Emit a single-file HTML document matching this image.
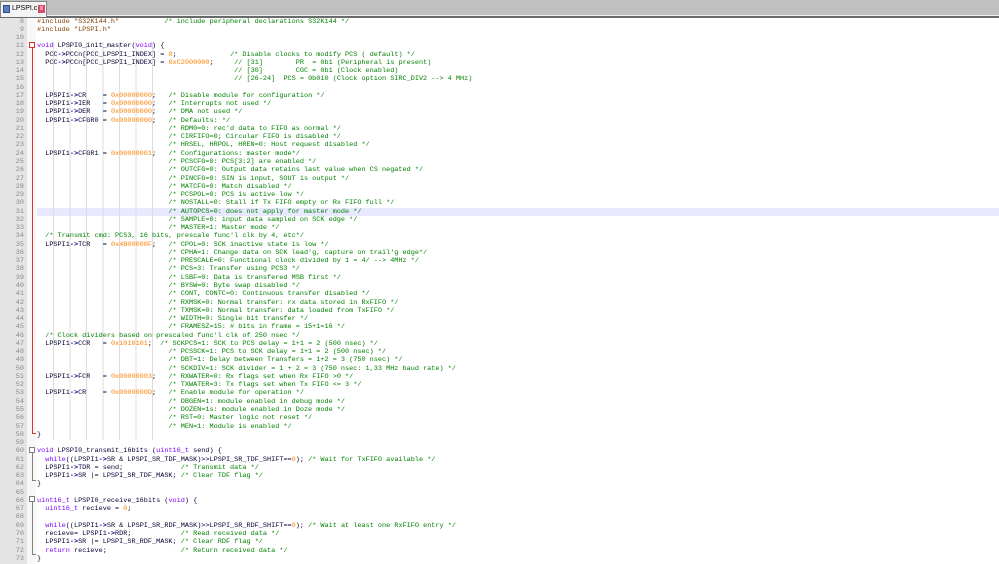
<!DOCTYPE html>
<html><head><meta charset="utf-8"><style>
html,body{margin:0;padding:0;width:999px;height:564px;overflow:hidden;background:#fff;}
#tabbar{position:absolute;left:0;top:0;width:999px;height:15px;background:#c0c0c0;border-bottom:1px solid #f0f0f0;}
#tabline{position:absolute;left:0;top:16px;width:999px;height:2px;background:#6a6a6a;}
#tab{position:absolute;left:0;top:1px;width:47px;height:16px;background:#f4f4f4;border:1px solid #888;border-bottom:none;box-sizing:border-box;font:7px "Liberation Sans",sans-serif;color:#000;}
#gut{position:absolute;left:0;top:18px;width:27px;height:546px;background:#e4e4e4;}
#fold{position:absolute;left:27px;top:18px;width:9px;height:546px;background:#f8f8f8;}
.code{position:absolute;left:0;top:17.5px;margin:0;font:6.85px/8.27px "Liberation Mono",monospace;color:#000030;white-space:pre;}
.num{position:absolute;left:0;top:17.5px;width:24px;text-align:right;font:6.85px/8.27px "Liberation Mono",monospace;color:#8a8a8a;white-space:pre;margin:0;}
.c{color:#008000}.n{color:#ff8000}.k{color:#8000ff}.p{color:#804000}.o{color:#000080;font-weight:bold}
#hl{position:absolute;left:37px;top:208.1px;width:962px;height:8.27px;background:#e8e8ff;}
#guides{position:absolute;left:53px;top:42px;width:104px;height:398px;background:repeating-linear-gradient(90deg,#dcdcdc 0 1px,transparent 1px 16.5px);}
</style></head><body>
<div id="tabbar"></div><div id="tabline"></div>
<div id="tab"><span style="position:absolute;left:2px;top:3px;width:7px;height:8px;background:#5a7fc0;border:1px solid #2b4d8c;box-sizing:border-box"></span><span style="position:absolute;left:11px;top:3px">LPSPI.c</span><span style="position:absolute;left:37px;top:3px;width:7px;height:8px;background:#d9486a;color:#fff;font-size:7px;line-height:8px;text-align:center">x</span></div>
<div id="gut"></div><div id="fold"></div>
<div id="hl"></div>
<div id="guides"></div>
<div style="position:absolute;left:29px;top:42px;width:6px;height:6px;border:1px solid #e03030;box-sizing:border-box;background:#fff"></div>
<div style="position:absolute;left:31.5px;top:48px;width:1px;height:385px;background:#e03030"></div>
<div style="position:absolute;left:31.5px;top:433px;width:4px;height:1px;background:#e03030"></div>
<div style="position:absolute;left:29px;top:447px;width:6px;height:6px;border:1px solid #808080;box-sizing:border-box;background:#fff"></div>
<div style="position:absolute;left:31.5px;top:453px;width:1px;height:27px;background:#808080"></div>
<div style="position:absolute;left:31.5px;top:480px;width:4px;height:1px;background:#808080"></div>
<div style="position:absolute;left:29px;top:496px;width:6px;height:6px;border:1px solid #808080;box-sizing:border-box;background:#fff"></div>
<div style="position:absolute;left:31.5px;top:502px;width:1px;height:52px;background:#808080"></div>
<div style="position:absolute;left:31.5px;top:554px;width:4px;height:1px;background:#808080"></div>
<pre class="num">8
9
10
11
12
13
14
15
16
17
18
19
20
21
22
23
24
25
26
27
28
29
30
31
32
33
34
35
36
37
38
39
40
41
42
43
44
45
46
47
48
49
50
51
52
53
54
55
56
57
58
59
60
61
62
63
64
65
66
67
68
69
70
71
72
73</pre>
<pre class="code" style="left:37px"><span class="p">#include "S32K144.h"</span>           <span class="c">/* include peripheral declarations S32K144 */</span>
<span class="p">#include "LPSPI.h"</span>

<span class="k">void</span> LPSPI0_init_master(<span class="k">void</span>) {
  PCC<span class="o">-&gt;</span>PCCn[PCC_LPSPI1_INDEX] = <span class="n">0</span>;             <span class="c">/* Disable clocks to modify PCS ( default) */</span>
  PCC<span class="o">-&gt;</span>PCCn[PCC_LPSPI1_INDEX] = <span class="n">0xC2000000</span>;     <span class="c">// [31]        PR  = 0b1 (Peripheral is present)</span>
                                                <span class="c">// [30]        CGC = 0b1 (Clock enabled)</span>
                                                <span class="c">// [26-24]  PCS = 0b010 (Clock option SIRC_DIV2 --&gt; 4 MHz)</span>

  LPSPI1<span class="o">-&gt;</span>CR    = <span class="n">0x00000000</span>;   <span class="c">/* Disable module for configuration */</span>
  LPSPI1<span class="o">-&gt;</span>IER   = <span class="n">0x00000000</span>;   <span class="c">/* Interrupts not used */</span>
  LPSPI1<span class="o">-&gt;</span>DER   = <span class="n">0x00000000</span>;   <span class="c">/* DMA not used */</span>
  LPSPI1<span class="o">-&gt;</span>CFGR0 = <span class="n">0x00000000</span>;   <span class="c">/* Defaults: */</span>
                                <span class="c">/* RDM0=0: rec'd data to FIFO as normal */</span>
                                <span class="c">/* CIRFIFO=0; Circular FIFO is disabled */</span>
                                <span class="c">/* HRSEL, HRPOL, HREN=0: Host request disabled */</span>
  LPSPI1<span class="o">-&gt;</span>CFGR1 = <span class="n">0x00000001</span>;   <span class="c">/* Configurations: master mode*/</span>
                                <span class="c">/* PCSCFG=0: PCS[3:2] are enabled */</span>
                                <span class="c">/* OUTCFG=0: Output data retains last value when CS negated */</span>
                                <span class="c">/* PINCFG=0: SIN is input, SOUT is output */</span>
                                <span class="c">/* MATCFG=0: Match disabled */</span>
                                <span class="c">/* PCSPOL=0: PCS is active low */</span>
                                <span class="c">/* NOSTALL=0: Stall if Tx FIFO empty or Rx FIFO full */</span>
                                <span class="c">/* AUTOPCS=0: does not apply for master mode */</span>
                                <span class="c">/* SAMPLE=0: input data sampled on SCK edge */</span>
                                <span class="c">/* MASTER=1: Master mode */</span>
  <span class="c">/* Transmit cmd: PCS3, 16 bits, prescale func'l clk by 4, etc*/</span>
  LPSPI1<span class="o">-&gt;</span>TCR   = <span class="n">0x4B00000F</span>;   <span class="c">/* CPOL=0: SCK inactive state is low */</span>
                                <span class="c">/* CPHA=1: Change data on SCK lead'g, capture on trail'g edge*/</span>
                                <span class="c">/* PRESCALE=0: Functional clock divided by 1 = 4/ --&gt; 4MHz */</span>
                                <span class="c">/* PCS=3: Transfer using PCS3 */</span>
                                <span class="c">/* LSBF=0: Data is transfered MSB first */</span>
                                <span class="c">/* BYSW=0: Byte swap disabled */</span>
                                <span class="c">/* CONT, CONTC=0: Continuous transfer disabled */</span>
                                <span class="c">/* RXMSK=0: Normal transfer: rx data stored in RxFIFO */</span>
                                <span class="c">/* TXMSK=0: Normal transfer: data loaded from TxFIFO */</span>
                                <span class="c">/* WIDTH=0: Single bit transfer */</span>
                                <span class="c">/* FRAMESZ=15: # bits in frame = 15+1=16 */</span>
  <span class="c">/* Clock dividers based on prescaled func'l clk of 250 nsec */</span>
  LPSPI1<span class="o">-&gt;</span>CCR   = <span class="n">0x1010101</span>;  <span class="c">/* SCKPCS=1: SCK to PCS delay = 1+1 = 2 (500 nsec) */</span>
                                <span class="c">/* PCSSCK=1: PCS to SCK delay = 1+1 = 2 (500 nsec) */</span>
                                <span class="c">/* DBT=1: Delay between Transfers = 1+2 = 3 (750 nsec) */</span>
                                <span class="c">/* SCKDIV=1: SCK divider = 1 + 2 = 3 (750 nsec: 1,33 MHz baud rate) */</span>
  LPSPI1<span class="o">-&gt;</span>FCR   = <span class="n">0x00000003</span>;   <span class="c">/* RXWATER=0: Rx flags set when Rx FIFO &gt;0 */</span>
                                <span class="c">/* TXWATER=3: Tx flags set when Tx FIFO &lt;= 3 */</span>
  LPSPI1<span class="o">-&gt;</span>CR    = <span class="n">0x0000000D</span>;   <span class="c">/* Enable module for operation */</span>
                                <span class="c">/* DBGEN=1: module enabled in debug mode */</span>
                                <span class="c">/* DOZEN=1s: module enabled in Doze mode */</span>
                                <span class="c">/* RST=0: Master logic not reset */</span>
                                <span class="c">/* MEN=1: Module is enabled */</span>
}

<span class="k">void</span> LPSPI0_transmit_16bits (<span class="k">uint16_t</span> send) {
  <span class="k">while</span>((LPSPI1<span class="o">-&gt;</span>SR &amp; LPSPI_SR_TDF_MASK)&gt;&gt;LPSPI_SR_TDF_SHIFT==<span class="n">0</span>); <span class="c">/* Wait for TxFIFO available */</span>
  LPSPI1<span class="o">-&gt;</span>TDR = send;              <span class="c">/* Transmit data */</span>
  LPSPI1<span class="o">-&gt;</span>SR |= LPSPI_SR_TDF_MASK; <span class="c">/* Clear TDF flag */</span>
}

<span class="k">uint16_t</span> LPSPI0_receive_16bits (<span class="k">void</span>) {
  <span class="k">uint16_t</span> recieve = <span class="n">0</span>;

  <span class="k">while</span>((LPSPI1<span class="o">-&gt;</span>SR &amp; LPSPI_SR_RDF_MASK)&gt;&gt;LPSPI_SR_RDF_SHIFT==<span class="n">0</span>); <span class="c">/* Wait at least one RxFIFO entry */</span>
  recieve= LPSPI1<span class="o">-&gt;</span>RDR;            <span class="c">/* Read received data */</span>
  LPSPI1<span class="o">-&gt;</span>SR |= LPSPI_SR_RDF_MASK; <span class="c">/* Clear RDF flag */</span>
  <span class="k">return</span> recieve;                  <span class="c">/* Return received data */</span>
}</pre>
</body></html>
